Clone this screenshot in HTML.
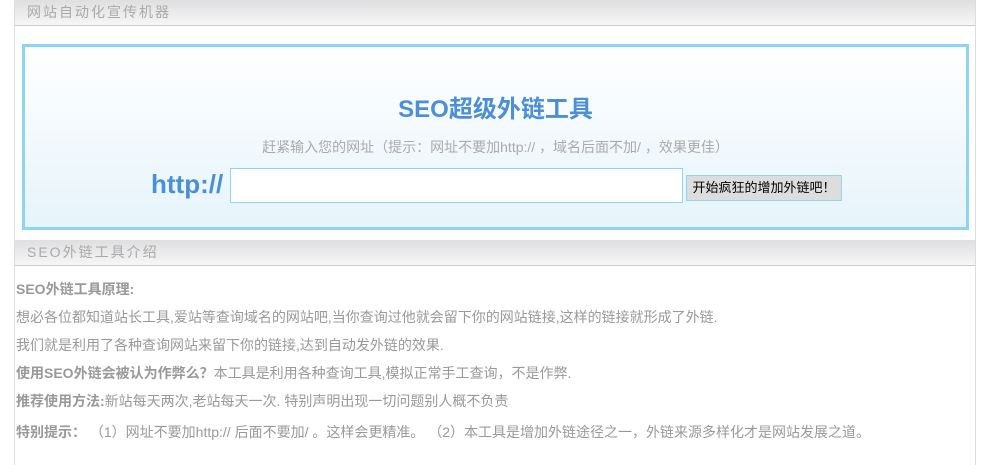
<!DOCTYPE html>
<html><head><meta charset="utf-8">
<style>
*{margin:0;padding:0;box-sizing:border-box}
body{width:981px;height:465px;background:#fff;font-family:"Liberation Sans","Noto Sans CJK SC",sans-serif;overflow:hidden;position:relative}
.wrap{position:absolute;left:14px;top:0;width:962px;height:465px;border-left:1px solid #ddd;border-right:1px solid #ddd}
.hd{position:absolute;left:0;width:960px;height:26px;background:linear-gradient(#dfdfe1,#f6f6f6);border-bottom:1px solid #ccc;color:#aaa;font-size:14px;line-height:25px;padding-left:12px;letter-spacing:2px}
.box{position:absolute;left:7px;top:44px;width:947px;height:186px;border:3px solid #8dd4f7;background:linear-gradient(#fff,#e6f4fb)}
.t{position:absolute;left:0;right:0;top:42px;text-align:center;color:#4a8fd8;font-size:24px;font-weight:bold}
.s{position:absolute;left:0;right:0;top:90px;text-align:center;color:#aaa;font-size:14px}
.h{position:absolute;left:126px;top:122px;color:#4a8fd8;font-size:26px;font-weight:bold}
.in{position:absolute;left:205px;top:121px;width:453px;height:35px;background:#fff;border:1px solid #8dd4f7}
.bt{position:absolute;left:661px;top:128px;width:156px;height:26px;background:#ddd;border:1px solid #8dd4f7;font-size:13px;line-height:24px;text-align:center;color:#000}
.c{position:absolute;left:1px;top:275px;font-size:14px;color:#999;line-height:28px;white-space:nowrap}
.c b{color:#999}
</style></head><body>
<div class="wrap">
<div class="hd" style="top:0">网站自动化宣传机器</div>
<div class="box">
<div class="t">SEO超级外链工具</div>
<div class="s">赶紧输入您的网址（提示：网址不要加http:// ，域名后面不加/ ，效果更佳）</div>
<div class="h">http://</div>
<div class="in"></div>
<div class="bt">开始疯狂的增加外链吧！</div>
</div>
<div class="hd" style="top:240px">SEO外链工具介绍</div>
<div class="c">
<b>SEO外链工具原理:</b><br>
想必各位都知道站长工具,爱站等查询域名的网站吧,当你查询过他就会留下你的网站链接,这样的链接就形成了外链.<br>
我们就是利用了各种查询网站来留下你的链接,达到自动发外链的效果.<br>
<b>使用SEO外链会被认为作弊么？</b>本工具是利用各种查询工具,模拟正常手工查询，不是作弊.<br>
<b>推荐使用方法:</b>新站每天两次,老站每天一次. 特别声明出现一切问题别人概不负责<br>
<span style="display:block;margin-top:3px"><b>特别提示：</b> （1）网址不要加http:// 后面不要加/ 。这样会更精准。 （2）本工具是增加外链途径之一，外链来源多样化才是网站发展之道。</span>
</div>
</div>
</body></html>
